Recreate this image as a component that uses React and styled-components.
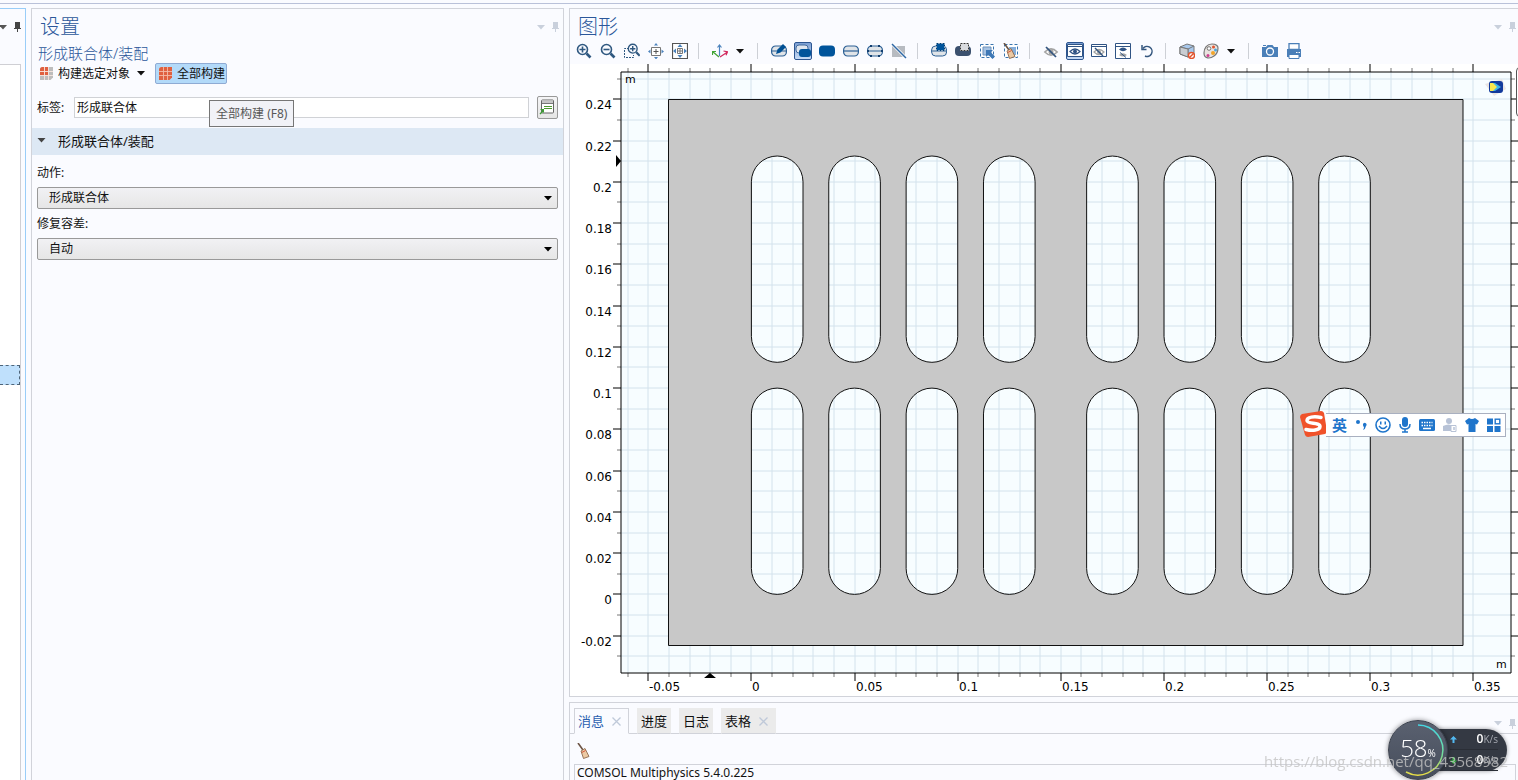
import React, { useState } from "react";
import styled, { createGlobalStyle } from "styled-components";

const GlobalStyle = createGlobalStyle`
  * {
    box-sizing: border-box;
  }
  body {
    margin: 0;
    overflow: hidden;
    background: #fafbff;
    color: #111;
    font: 12px/16px "Noto Sans", "Noto Sans CJK SC", sans-serif;
  }
  button, input, select {
    font: inherit;
    color: inherit;
    margin: 0;
  }
  svg {
    display: block;
    flex: none;
  }
`;

const Page = styled.div`
  min-height: 100vh;
  display: flex;
  flex-direction: column;
  padding-top: 3px;
  background: #fafbff;
`;

const Columns = styled.main`
  flex: 1;
  display: grid;
  grid-template-columns: 26px 533fr 949fr;
  gap: 5px;
  padding-top: 4px;
  border-top: 1px solid #b9c1d9;
`;

const TreePanel = styled.aside`
  display: flex;
  flex-direction: column;
  border: 1px solid #99cdf8;
  border-width: 1px 1px 0 0;
  padding-right: 4px;
`;

const TreeTools = styled.div`
  display: flex;
  align-items: center;
  justify-content: flex-end;
  gap: 7px;
  height: 55px;
  padding-bottom: 19px;
`;

const TreeBody = styled.div`
  flex: 1;
  background: #fff;
  border: 1px solid #cfcfd4;
  border-width: 1px 1px 0 0;
  padding-top: 300px;
`;

const TreeRow = styled.div`
  height: 20px;
  background: #bfe0fc;
  border: 1px dashed #4d6478;
  border-left: 0;
`;

const Panel = styled.section`
  display: flex;
  flex-direction: column;
  min-width: 0;
  border: 1px solid #d1d3da;
  border-width: ${p => p.$edges || "1px"};
`;

const TitleBar = styled.header`
  display: flex;
  justify-content: space-between;
  align-items: center;
  height: 36px;
  padding: 0 ${p => (p.$flush ? "2px" : "4px")} 0 8px;
`;

const Title = styled.h1`
  margin: 0;
  font-size: 20px;
  line-height: 36px;
  font-weight: 300;
  color: #2b579a;
`;

const PanelTools = styled.div`
  display: flex;
  align-items: center;
  gap: 7px;
`;

const Subtitle = styled.h2`
  margin: 0;
  padding: 0 0 2px 6px;
  font-size: 15px;
  line-height: 16px;
  font-weight: 300;
  color: #2b579a;
`;

const BuildRow = styled.div`
  display: flex;
  gap: 6px;
  padding-left: 4px;
`;

const BuildItem = styled.div`
  position: relative;
`;

const BuildButton = styled.button`
  display: flex;
  align-items: center;
  gap: 5px;
  height: 21px;
  padding: 0 1px 0 3px;
  border: 1px solid ${p => (p.$active ? "#8fabd4" : "transparent")};
  border-radius: 2px;
  background: ${p => (p.$active ? "#b3daf9" : "none")};
  svg + svg {
    margin: 0 2px;
  }
`;

const Tooltip = styled.div`
  position: absolute;
  z-index: 2;
  left: 54px;
  top: 37px;
  padding: 4px 6px;
  line-height: 17px;
  white-space: nowrap;
  color: #575757;
  background: #f1f2f7;
  border: 1px solid #767676;
`;

const LabelRow = styled.div`
  display: flex;
  align-items: center;
  height: 23px;
  margin: 12px 5px 9px;
`;

const LabelText = styled.label`
  width: 37px;
`;

const LabelInput = styled.input`
  flex: 1;
  min-width: 0;
  height: 21px;
  margin-right: 8px;
  padding: 0 2px 2px;
  border: 1px solid #d0d2d6;
  background: #fff;
`;

const GoButton = styled.button`
  display: flex;
  width: 21px;
  height: 23px;
  padding: 2px 1px;
  border: 1px solid #999;
  border-radius: 2px;
  background: linear-gradient(#f5f5f7, #e5e5e5);
`;

const SectionHead = styled.button`
  display: flex;
  align-items: center;
  gap: 12px;
  height: 27px;
  padding: 0 5px 2px;
  border: 0;
  background: #dde8f4;
  font-size: 13px;
  text-align: left;
`;

const Fields = styled.div`
  display: flex;
  flex-direction: column;
  padding: 10px 5px;
`;

const FieldLabel = styled.label`
  line-height: 16px;
  margin-bottom: 6px;
`;

const SelectBox = styled.div`
  display: grid;
  align-items: center;
  margin-bottom: 7px;
  > * {
    grid-area: 1 / 1;
  }
  svg {
    justify-self: end;
    margin-right: 6px;
    pointer-events: none;
  }
`;

const Select = styled.select`
  appearance: none;
  width: 100%;
  height: 22px;
  padding: 0 20px 1px 11px;
  border: 1px solid #999;
  border-radius: 2px;
  background: linear-gradient(#f1f1f4, #e6e6e6);
`;

const RightSide = styled.div`
  display: flex;
  flex-direction: column;
  gap: 5px;
  min-width: 0;
  overflow: hidden;
`;

const Toolbar = styled.div`
  display: flex;
  align-items: center;
  height: 19px;
  padding-left: 2px;
`;

const ToolButton = styled.button`
  display: flex;
  align-items: center;
  justify-content: center;
  width: 18px;
  height: 18px;
  margin: 0 3px;
  margin-top: -7px;
  padding: 0;
  border: ${p => (p.$on ? "1px solid #2c5591" : "0")};
  border-radius: 2px;
  background: ${p => (p.$on ? "linear-gradient(#7c9fd3, #c6dbf5)" : "none")};
`;

const DropButton = styled.button`
  display: flex;
  align-items: center;
  width: 19px;
  height: 18px;
  margin-top: -7px;
  padding: 0 0 0 4px;
  border: 0;
  background: none;
`;

const Divider = styled.span`
  width: 1px;
  height: 16px;
  margin: -7px 9px 0 6px;
  background: #cdd0d6;
`;

const Canvas = styled.div`
  position: relative;
  overflow: hidden;
  background: #fff;
`;

const Plot = styled.svg`
  width: 100%;
  height: auto;
  font: 12px "DejaVu Sans", sans-serif;
`;

const ScrollThumb = styled.span`
  position: absolute;
  top: 3px;
  right: -10px;
  width: 12px;
  height: 50px;
  border: 1px solid #555;
  border-radius: 4px;
  background: #fff;
`;

const MessagePanel = styled(Panel)`
  flex: 1 0 78px;
  height: 78px;
  padding-top: 5px;
`;

const TabBar = styled.div`
  display: flex;
  gap: 8px;
  height: 26px;
  padding: 0 2px 0 4px;
  border-bottom: 1px solid #d1d3da;
`;

const Tab = styled.button`
  display: flex;
  align-items: center;
  gap: 8px;
  height: 26px;
  padding: 0 3px;
  font-size: 13px;
  border: 1px solid ${p => (p.$active ? "#d1d3da" : "#ebebeb")};
  border-bottom-color: ${p => (p.$active ? "#fafbff" : "#d1d3da")};
  background: ${p => (p.$active ? "#fafbff" : "#ebebeb")};
  color: ${p => (p.$active ? "#2b5fb0" : "#111")};
  svg {
    margin-right: 4px;
  }
`;

const TabTools = styled(PanelTools)`
  margin-left: auto;
  padding-top: 6px;
`;

const MessageTools = styled.div`
  display: flex;
  align-items: center;
  height: 30px;
  padding: 4px 5px 0;
`;

const MessageLog = styled.div`
  flex: 1;
  margin: 0 2px 0 4px;
  padding: 0 2px;
  line-height: 15px;
  border: 1px solid #d1d3da;
  border-bottom: 0;
  overflow: hidden;
`;

const ImeBar = styled.div`
  position: fixed;
  top: 410px;
  right: 12px;
  display: flex;
  align-items: flex-start;
`;

const ImeStrip = styled.div`
  display: flex;
  align-items: center;
  justify-content: space-between;
  width: 180px;
  height: 24px;
  margin: 3px 0 0 -1px;
  padding: 0 4px 0 6px;
  border: 1px solid #a9b0c0;
  border-left: 0;
  background: #fff;
  color: #1f75cb;
`;

const ImeMode = styled.span`
  font-size: 15px;
  line-height: 20px;
  font-weight: 700;
`;

const Monitor = styled.div`
  position: fixed;
  right: 11px;
  bottom: 0;
  width: 119px;
  height: 60px;
  display: flex;
  align-items: center;
  color: #fff;
`;

const Speeds = styled.div`
  width: 80px;
  height: 42px;
  margin-left: -20px;
  padding: 0 9px 0 22px;
  border-radius: 0 21px 21px 0;
  background: #343943;
  box-shadow: 0 0 4px rgba(0, 0, 0, 0.4);
`;

const Speed = styled.div`
  display: flex;
  align-items: center;
  height: 21px;
  border-bottom: 1px solid #2a2e36;
  font: 600 12px/20px "Open Sans", sans-serif;
  svg {
    margin-right: auto;
  }
  span {
    color: #a4a8b0;
    font-size: 10px;
    font-weight: 400;
  }
`;

const Gauge = styled.div`
  position: relative;
  z-index: 1;
  display: grid;
  place-items: center;
  width: 60px;
  height: 60px;
  border: 1px solid #3b414d;
  border-radius: 50%;
  background: linear-gradient(#5a6170, #474e5c);
  box-shadow: 0 0 5px rgba(0, 0, 0, 0.45);
  > * {
    grid-area: 1 / 1;
  }
`;

const GaugeValue = styled.div`
  font: 300 24px/30px "Open Sans", sans-serif;
  small {
    font-size: 10px;
    font-weight: 400;
  }
`;

const Watermark = styled.div`
  position: fixed;
  z-index: 3;
  right: 10px;
  bottom: 8px;
  font: 15px/22px "Open Sans", sans-serif;
  color: rgba(195, 195, 195, 0.8);
  pointer-events: none;
`;

const Caret = ({ color = "#111", size = 8 }) => (
  <svg width={size} height="5" viewBox="0 0 8 5">
    <path d="M0 0h8L4 4.500z" fill={color} />
  </svg>
);

const Pin = ({ color }) => (
  <svg width="7" height="10" viewBox="0 0 7 10">
    <path d="M1 0h5v6h1v1H4v3H3V7H0V6h1z" fill={color} />
  </svg>
);

const Close = () => (
  <svg width="9" height="9" viewBox="0 0 9 9">
    <path d="M.5.5l8 8M8.500.5l-8 8" stroke="#bfc9d9" strokeWidth="1.300" />
  </svg>
);

const BuildIcon = ({ all }) => (
  <svg width="13" height="13" viewBox="0 0 13 13">
    <path d="M0 2.500Q0 0 2.500 0H13v10.500L10.500 13H0z" fill={all ? "#e0603f" : "#bdbdbd"} />
    {!all && <path d="M0 2.500Q0 0 2.500 0H8v8H0z" fill="#e0603f" />}
    <path
      d="M4.500 0v13M8.500 0v13M0 4.500h13M0 8.500h13"
      stroke={all ? "#f3b9a6" : "#f7e6e0"}
      strokeWidth=".9"
    />
  </svg>
);

const GoIcon = () => (
  <svg width="17" height="17" viewBox="0 0 17 17">
    <rect x="2.500" y="1" width="12" height="13" rx="1" fill="#fff" stroke="#666" />
    <path d="M3 1.500h11V4H3z" fill="#c6c6c6" />
    <path d="M3 4.500h11" stroke="#777" />
    <path d="M5 7.500h8M5 9.500h8" stroke="#4e9a2f" />
    <path d="M1 10h4v4L4 13l-2.500 2.500-1-1L3 12z" fill="#3d9a35" />
  </svg>
);

const Eye = ({ y = 8, color = "#2f5384" }) => (
  <g transform={`translate(8 ${y})`}>
    <path d="M-5 0Q0-5 5 0Q0 5-5 0z" fill="#fff" stroke={color} strokeWidth="1.200" />
    <circle r="2" fill={color} />
  </g>
);

const HiddenEye = ({ y = 8 }) => (
  <g>
    <Eye y={y} color="#a3a3a3" />
    <path d={`M4 ${y - 4}l8 8`} stroke="#33557f" strokeWidth="1.400" />
  </g>
);

const WindowFrame = () => (
  <g>
    <path d="M.5 1.500h15v12H.5z" fill="#fff" stroke="#2f5384" />
    <path d="M1 3.500h14" stroke="#2f5384" />
  </g>
);

const Slab = ({ fill = "#e0e4e8" }) => (
  <rect x=".6" y="3" width="14.800" height="10" rx="4" fill={fill} stroke="#2c6095" strokeWidth="1.200" />
);

const glass = (
  <g fill="none" stroke="#2f5880">
    <circle cx="6.500" cy="6.500" r="5" strokeWidth="1.600" />
    <path d="M10.500 10.500l4 4" strokeWidth="2.600" />
  </g>
);

const broom = (
  <g>
    <path d="M3 0l5 7" stroke="#6b5344" strokeWidth="1.600" />
    <path d="M6 8l4-2.500 4 8L8.500 15.500z" fill="#ecc9a3" stroke="#8c6a4d" strokeWidth=".9" />
    <path d="M6.800 9.500l3.800-2" stroke="#d5563a" />
  </g>
);

// 16x16 drawings for the graphics toolbar
const drawings = {
  zoomIn: <g>{glass}<path d="M3.500 6.500h6M6.500 3.500v6" stroke="#2f5880" strokeWidth="1.600" /></g>,
  zoomOut: <g>{glass}<path d="M3.500 6.500h6" stroke="#2f5880" strokeWidth="1.600" /></g>,
  zoomBox: (
    <g>
      <path d="M5 5.500H.5v9h9V12" fill="none" stroke="#2f5880" strokeDasharray="2 1" />
      <g transform="translate(3 0) scale(.88)">
        {glass}
        <path d="M3.500 6.500h6M6.500 3.500v6" stroke="#2f5880" strokeWidth="1.600" />
      </g>
    </g>
  ),
  zoomSelected: (
    <g>
      <path d="M3.500 4.500h9v8h-9z" fill="#fff" stroke="#777" />
      <path d="M8 6v5M5.500 8.500h5" stroke="#555" />
      <path d="M8 0l2 2.500H6zM8 16.500L10 14H6zM0 8.500l2.500-2v4zM16 8.500l-2.500-2v4z" fill="#4c83bd" />
    </g>
  ),
  zoomExtents: (
    <g>
      <path d="M.5.5h15v15H.5z" fill="#fff" stroke="#555" strokeWidth="1.200" />
      <path d="M5.500 5.500h5v5h-5zM8 6v4M6 8h4" fill="none" stroke="#777" />
      <path d="M8 1l2.500 3h-5zM8 15l2.500-3h-5zM1 8l3-2.500v5zM15 8l-3-2.500v5z" fill="#4c83bd" />
    </g>
  ),
  axes: (
    <g fill="none" strokeWidth="1.200">
      <path d="M7.500 13V2M5.500 4.500l2-2.500 2 2.500" stroke="#4c83bd" />
      <path d="M7 14L.5 8.500M.5 12V8.500H4" stroke="#42a535" />
      <path d="M8 14l7.500-5M11.500 8l4 .8-1.500 3.500" stroke="#d2285d" />
    </g>
  ),
  draw: (
    <g>
      <Slab />
      <path d="M1 8h14" stroke="#2c6095" />
      <path d="M5 11l1.500-4.500L12 1l3 3-5.500 5.500z" fill="#005094" />
    </g>
  ),
  union: (
    <g>
      <rect x="1" y="2" width="12" height="8" rx="3" fill="#dfe6ef" stroke="#41699c" />
      <rect x="4" y="6" width="12" height="8" rx="3" fill="#00549b" />
    </g>
  ),
  solid: <rect y="2.500" width="16" height="11" rx="4" fill="#00549b" />,
  lines: <g><Slab /><path d="M1 8h14" stroke="#2c6095" strokeWidth="1.200" /></g>,
  points: (
    <g>
      <Slab />
      <path d="M1 8h14" stroke="#2c6095" />
      <path d="M3 2h2v2H3zM11 2h2v2h-2zM3 12h2v2H3zM11 12h2v2h-2zM0 7h2v2H0zM14 7h2v2h-2z" fill="#123f70" />
    </g>
  ),
  noSelect: (
    <g>
      <path d="M1 3h13v11H1z" fill="#b7bbc1" />
      <path d="M1 1l14 14" stroke="#fff" strokeWidth="3" />
      <path d="M1 1l14 14" stroke="#2f68a5" strokeWidth="1.500" />
    </g>
  ),
  boxSelect: (
    <g>
      <path d="M.6 7q0-4 4-4h7q4 0 4 4v2q0 4-4 4h-7q-4 0-4-4z" fill="#e0e4e8" stroke="#2c6095" />
      <path d="M1 8h14" stroke="#2c6095" />
      <path d="M5.500.5h8v7h-8z" fill="#00549b" stroke="#fff" />
      <path d="M5.500.5h8v7h-8z" fill="none" stroke="#003d75" strokeDasharray="2 1" />
    </g>
  ),
  boxDeselect: (
    <g>
      <rect y="3" width="16" height="10" rx="4" fill="#3b506e" />
      <path d="M5.500.5h8v7h-8z" fill="#d9dbdf" stroke="#fff" />
      <path d="M5.500.5h8v7h-8z" fill="none" stroke="#333" strokeDasharray="2 1" />
    </g>
  ),
  pick: (
    <g>
      <path d="M1.500 1.500h13v13h-13z" fill="#fff" stroke="#3974ae" strokeDasharray="3 2" />
      <path d="M4 4h8v8H4z" fill="#a7c3e3" stroke="#6d91bb" />
      <path d="M7 7h7l-2.200 2.200L16 13.500 13.500 16 9.200 11.800 7 14z" fill="#3e78b6" />
    </g>
  ),
  clear: (
    <g>
      <path d="M1.500 1.500h13v13h-13z" fill="#fff" stroke="#3974ae" strokeDasharray="3 2" />
      <path d="M6 4h7v8H6z" fill="#85aedb" />
      <g transform="translate(-2 0)">{broom}</g>
    </g>
  ),
  hide: (
    <g transform="translate(-2 -1) scale(1.25)">
      <HiddenEye />
    </g>
  ),
  showEye: <g><WindowFrame /><Eye y={8.5} /></g>,
  hideWindow: <g><WindowFrame /><HiddenEye y={9} /></g>,
  showHidden: (
    <g>
      <path d="M.5.5h15v15H.5zM1 3.500h14" fill="#fff" stroke="#2f5384" />
      <path d="M4 6.500Q8 2.500 12 6.500Q8 10 4 6.500z" fill="#2f5384" />
      <path d="M4 12Q8 8.500 12 12Q8 15 4 12z" fill="#a3a3a3" />
      <path d="M5 9.500l6 5" stroke="#33557f" />
    </g>
  ),
  reset: (
    <g fill="none" stroke="#35577f" strokeWidth="1.500">
      <path d="M4 5.500A5 5 0 1 1 6 13" />
      <path d="M3 2v4.500h4.500" />
    </g>
  ),
  box: (
    <g>
      <path d="M1 4l7-3 7 2v8l-6 3-8-3z" fill="#a8c8ec" stroke="#777" />
      <path d="M1 4l8 2 6-3M9 6v8" fill="none" stroke="#777" />
      <path d="M1 4l8 2v8l-8-3z" fill="#c9cdd2" stroke="#777" />
      <circle cx="12.500" cy="12.500" r="3" fill="#fff" stroke="#e2532d" strokeWidth="1.400" />
      <path d="M10.500 14.500l4-4" stroke="#e2532d" strokeWidth="1.400" />
    </g>
  ),
  palette: (
    <g>
      <path d="M9 1C4 1 1 5 1 10c0 6 6 6 10 3 3-2 4-5 4-8 0-2-2-4-6-4z" fill="#e9e3df" stroke="#777" strokeWidth="1.200" />
      <circle cx="6" cy="5.500" r="1.800" fill="#fff" stroke="#777" />
      <circle cx="10.500" cy="4" r="1.500" fill="#e2532d" />
      <circle cx="12.500" cy="7" r="1.500" fill="#49a7dd" />
      <circle cx="10" cy="10" r="2" fill="#f1a52a" />
      <circle cx="5" cy="12.500" r="1.500" fill="#d23c92" />
    </g>
  ),
  camera: (
    <g>
      <path d="M0 4h4l1.500-2h5L12 4h4v10H0z" fill="#4a7fb8" />
      <circle cx="8" cy="8.500" r="3.500" fill="#4a7fb8" stroke="#fff" strokeWidth="1.300" />
      <path d="M1 2.500h3" stroke="#4a7fb8" />
    </g>
  ),
  printer: (
    <g>
      <path d="M3 .5h10v6H3z" fill="#fff" stroke="#4a7fb8" strokeWidth="1.300" />
      <path d="M1 6h14v8H1z" fill="#4a7fb8" />
      <path d="M3 11.500h10v4H3z" fill="#fff" stroke="#4a7fb8" />
      <path d="M10 9.500h1.500M12.500 9.500H14" stroke="#fff" />
    </g>
  )
};

const tools = [
  ["zoomIn", "放大"], ["zoomOut", "缩小"], ["zoomBox", "缩放框"], ["zoomSelected", "缩放到选定"], ["zoomExtents", "缩放到窗口大小"],
  "|",
  ["axes", "转到视图"], "v",
  "|",
  ["draw", "绘制"], ["union", "选择对象"], ["solid", "选择域"], ["lines", "选择边界"], ["points", "选择点"], ["noSelect", "禁用选择"],
  "|",
  ["boxSelect", "选择框"], ["boxDeselect", "取消选择框"], ["pick", "选择"], ["clear", "清除选择"],
  "|",
  ["hide", "隐藏"], ["showEye", "视图"], ["hideWindow", "隐藏视图"], ["showHidden", "仅显示隐藏"], ["reset", "重置隐藏"],
  "|",
  ["box", "透明"], ["palette", "颜色"], "v",
  "|",
  ["camera", "图像快照"], ["printer", "打印"]
];

// metres -> plot pixels
const SCALE = 2063;
const px = v => Math.round(181.4 + v * SCALE);
const py = v => Math.round(530.4 - v * SCALE);

const frame = { left: 51, top: 8, right: 941, bottom: 609 };
const xTicks = Array.from({ length: 42 }, (_, i) => i - 6);
const yTicks = Array.from({ length: 29 }, (_, i) => i - 3);
const slotX = [0, 0.0375, 0.075, 0.1125, 0.1625, 0.2, 0.2375, 0.275];
const slotY = [0.1, 0.2125];

const slotPath = (x, y) => {
  const l = 181.4 + x * SCALE;
  const t = 530.4 - y * SCALE;
  const r = 25.8;
  return `M${l} ${t + r}a${r} ${r} 0 0 1 ${2 * r} 0v${206.3 - 2 * r}a${r} ${r} 0 0 1 -${2 * r} 0z`;
};

const platePath =
  "M98.500 35.500H893V581.500H98.500z" +
  slotY.map(y => slotX.map(x => slotPath(x, y)).join("")).join("");

const Geometry = () => (
  <Plot viewBox="0 0 948 632" role="img" aria-label="图形">
    <rect x="51" y="8" width="890" height="601" fill="#f7fdff" />
    <g stroke="#d3e2ec">
      {xTicks.map(i => (
        <path key={i} d={`M${px(i / 100)} ${frame.top}V${frame.bottom}`} />
      ))}
      {yTicks.map(i => (
        <path key={i} d={`M${frame.left} ${py(i / 100)}H${frame.right}`} />
      ))}
    </g>
    <path d={platePath} fill="#c8c8c8" fillRule="evenodd" stroke="#111" />
    {xTicks.map(i => {
      const major = i % 5 === 0;
      const len = major ? 8 : 4;
      const x = px(i / 100);
      return (
        <g key={i}>
          <path
            d={`M${x} ${frame.top}v-${len}M${x} ${frame.bottom}v${len}`}
            stroke={major ? "#000" : "#777"}
          />
          {major && <text x={x + 1} y="627">{i / 100}</text>}
        </g>
      );
    })}
    {yTicks.map(i => {
      const major = i % 2 === 0;
      const len = major ? 8 : 4;
      const y = py(i / 100);
      return (
        <g key={i}>
          <path
            d={`M${frame.left} ${y}h-${len}M${frame.right} ${y}h${len}`}
            stroke={major ? "#000" : "#777"}
          />
          {major && <text x="42" y={y + 10} textAnchor="end">{i / 100}</text>}
        </g>
      );
    })}
    <path d="M51 8H941V609H51z" fill="none" stroke="#000" />
    <path d="M46 91l5 6-5 6zM134 614l6-5 6 5z" />
    <text x="55" y="19" fontSize="11">m</text>
    <text x="926" y="604" fontSize="11">m</text>
    <g transform="translate(925 23)">
      <path d="M-10-3L7-8l4 10L-1 9z" fill="#e9e4e4" />
      <rect x="-6" y="-6" width="14" height="12" rx="3" fill="#123a9c" />
      <path d="M-5-4h5l6 4-6 4h-5z" fill="#3fb6e8" />
      <path d="M-5-4h3l4 4-4 4h-3z" fill="#fbe84e" />
    </g>
  </Plot>
);

const ImeIcon = ({ w = 16, children }) => (
  <svg width={w} height="16" viewBox={`0 0 ${w} 16`} fill="#1f75cb">
    {children}
  </svg>
);

const Ime = () => (
  <ImeBar>
    <svg width="27" height="28" viewBox="0 0 27 28">
      <path d="M2 4L21 1q2 0 3 2l3 18q0 2-2 3L8 27q-2 0-3-2L0 7q0-2 2-3z" fill="#f0522a" />
      <path
        d="M21 7.500C14 6 7 7 7 10.500c0 4 13 1.500 13 6 0 4-8 4.500-14 3"
        fill="none"
        stroke="#fff"
        strokeWidth="3.500"
        strokeLinecap="round"
      />
    </svg>
    <ImeStrip>
      <ImeMode>英</ImeMode>
      <ImeIcon w={12}>
        <circle cx="3" cy="5" r="2" />
        <path d="M8 8a1.800 1.800 0 1 1 3 1q-.5 3-3 4 1-1.500 1-3-1-.5-1-2z" />
      </ImeIcon>
      <ImeIcon>
        <circle cx="8" cy="8" r="7" fill="none" stroke="#1f75cb" strokeWidth="1.600" />
        <path d="M5 4.500h1.500v3H5zM9.500 4.500H11v3H9.500z" />
        <path d="M4 9q4 5 8 0" fill="none" stroke="#1f75cb" strokeWidth="1.500" />
      </ImeIcon>
      <ImeIcon w={12}>
        <rect x="3" width="6" height="10" rx="3" />
        <path d="M1 7q0 5 5 5t5-5M6 12v3M3 15h6" fill="none" stroke="#1f75cb" strokeWidth="1.500" />
      </ImeIcon>
      <ImeIcon>
        <rect y="2" width="16" height="12" rx="1.500" />
        <path d="M2.500 5.500h11M2.500 8.500h11" stroke="#fff" strokeWidth="1.500" strokeDasharray="1.500 1" />
        <path d="M4 11.500h8" stroke="#fff" strokeWidth="1.500" />
      </ImeIcon>
      <ImeIcon w={14}>
        <circle cx="6" cy="4" r="3" fill="#b7c2d6" />
        <path d="M0 14V9q6-3 10 0v5z" fill="#b7c2d6" />
        <path d="M8 8.500h5v6H8z" fill="#fff" stroke="#b7c2d6" />
        <path d="M11 10v3" stroke="#b7c2d6" strokeWidth="1.500" />
      </ImeIcon>
      <ImeIcon w={14}>
        <path d="M4 1q3 2 6 0l4 3-2 3.500-1.500-.5v8h-7V7L2 7.500 0 4z" />
      </ImeIcon>
      <ImeIcon w={14}>
        <path d="M0 1.500h6v6H0zM0 9h6v6H0zM7.500 9h6v6h-6z" />
        <rect x="8.200" y="2.200" width="4.600" height="4.600" fill="#fff" stroke="#1f75cb" strokeWidth="1.400" />
      </ImeIcon>
    </ImeStrip>
  </ImeBar>
);

const SpeedMonitor = () => (
  <Monitor>
    <Gauge>
      <svg width="58" height="58" viewBox="0 0 58 58">
        <defs>
          <linearGradient id="ring" x1="0" y1="0" x2="0" y2="1">
            <stop offset="0" stopColor="#44d8e4" />
            <stop offset=".6" stopColor="#74dc9a" />
            <stop offset="1" stopColor="#e8dc45" />
          </linearGradient>
        </defs>
        <path d="M29 4A25 25 0 1 1 17 51" fill="none" stroke="url(#ring)" strokeWidth="1.500" />
      </svg>
      <GaugeValue>
        58<small>%</small>
      </GaugeValue>
    </Gauge>
    <Speeds>
      <Speed>
        <svg width="7" height="7" viewBox="0 0 7 7">
          <path d="M3.500 0L7 3.500H4.500V7h-2V3.500H0z" fill="#52b9f2" />
        </svg>
        0<span>K/s</span>
      </Speed>
      <Speed>
        <svg width="7" height="7" viewBox="0 0 7 7">
          <path d="M3.500 7L0 3.500h2.500V0h2v3.500H7z" fill="#30b53c" />
        </svg>
        0<span>K/s</span>
      </Speed>
    </Speeds>
  </Monitor>
);

const App = () => {
  const [label, setLabel] = useState("形成联合体");
  const [tab, setTab] = useState("消息");
  const [on, setOn] = useState({ union: true, showEye: true });

  return (
    <Page>
      <GlobalStyle />
      <Columns>
        <TreePanel>
          <TreeTools>
            <Caret color="#555" />
            <Pin color="#444" />
          </TreeTools>
          <TreeBody>
            <TreeRow />
          </TreeBody>
        </TreePanel>

        <Panel $edges="1px 1px 0">
          <TitleBar>
            <Title>设置</Title>
            <PanelTools>
              <Caret color="#c9d0dc" />
              <Pin color="#c9d0dc" />
            </PanelTools>
          </TitleBar>
          <Subtitle>形成联合体/装配</Subtitle>
          <BuildRow>
            <BuildItem>
              <BuildButton>
                <BuildIcon />
                构建选定对象
                <Caret />
              </BuildButton>
            </BuildItem>
            <BuildItem>
              <BuildButton $active aria-describedby="build-tip">
                <BuildIcon all />
                全部构建
              </BuildButton>
              <Tooltip id="build-tip" role="tooltip">全部构建 (F8)</Tooltip>
            </BuildItem>
          </BuildRow>
          <LabelRow>
            <LabelText htmlFor="node-label">标签:</LabelText>
            <LabelInput id="node-label" value={label} onChange={e => setLabel(e.target.value)} />
            <GoButton aria-label="转到源">
              <GoIcon />
            </GoButton>
          </LabelRow>
          <SectionHead>
            <Caret color="#444" size={9} />
            形成联合体/装配
          </SectionHead>
          <Fields>
            <FieldLabel htmlFor="action">动作:</FieldLabel>
            <SelectBox>
              <Select id="action">
                <option>形成联合体</option>
                <option>形成装配</option>
              </Select>
              <Caret color="#000" />
            </SelectBox>
            <FieldLabel htmlFor="tolerance">修复容差:</FieldLabel>
            <SelectBox>
              <Select id="tolerance">
                <option>自动</option>
                <option>相对</option>
              </Select>
              <Caret color="#000" />
            </SelectBox>
          </Fields>
        </Panel>

        <RightSide>
          <Panel $edges="1px 0 1px 1px">
            <TitleBar $flush>
              <Title>图形</Title>
              <PanelTools>
                <Caret color="#c9d0dc" />
                <Pin color="#c9d0dc" />
              </PanelTools>
            </TitleBar>
            <Toolbar>
              {tools.map((tool, i) => {
                if (tool === "|") return <Divider key={i} />;
                if (tool === "v")
                  return (
                    <DropButton key={i} aria-label="更多">
                      <Caret />
                    </DropButton>
                  );
                const [name, title] = tool;
                return (
                  <ToolButton
                    key={i}
                    aria-label={title}
                    $on={on[name]}
                    onClick={() => setOn({ ...on, [name]: !on[name] })}
                  >
                    <svg width="16" height="16" viewBox="0 0 16 16">
                      {drawings[name]}
                    </svg>
                  </ToolButton>
                );
              })}
            </Toolbar>
            <Canvas>
              <Geometry />
              <ScrollThumb />
            </Canvas>
          </Panel>

          <MessagePanel $edges="1px 0 0 1px">
            <TabBar>
              {["消息", "进度", "日志", "表格"].map(name => (
                <Tab key={name} $active={tab === name} onClick={() => setTab(name)}>
                  {name}
                  {(name === "消息" || name === "表格") && <Close />}
                </Tab>
              ))}
              <TabTools>
                <Caret color="#c9d0dc" />
                <Pin color="#c9d0dc" />
              </TabTools>
            </TabBar>
            <MessageTools>
              <svg width="16" height="16" viewBox="0 0 16 16">
                {broom}
              </svg>
            </MessageTools>
            <MessageLog>COMSOL Multiphysics 5.4.0.225</MessageLog>
          </MessagePanel>
        </RightSide>
      </Columns>
      <Ime />
      <SpeedMonitor />
      <Watermark>https://blog.csdn.net/qq_43568982</Watermark>
    </Page>
  );
};

export default App;
